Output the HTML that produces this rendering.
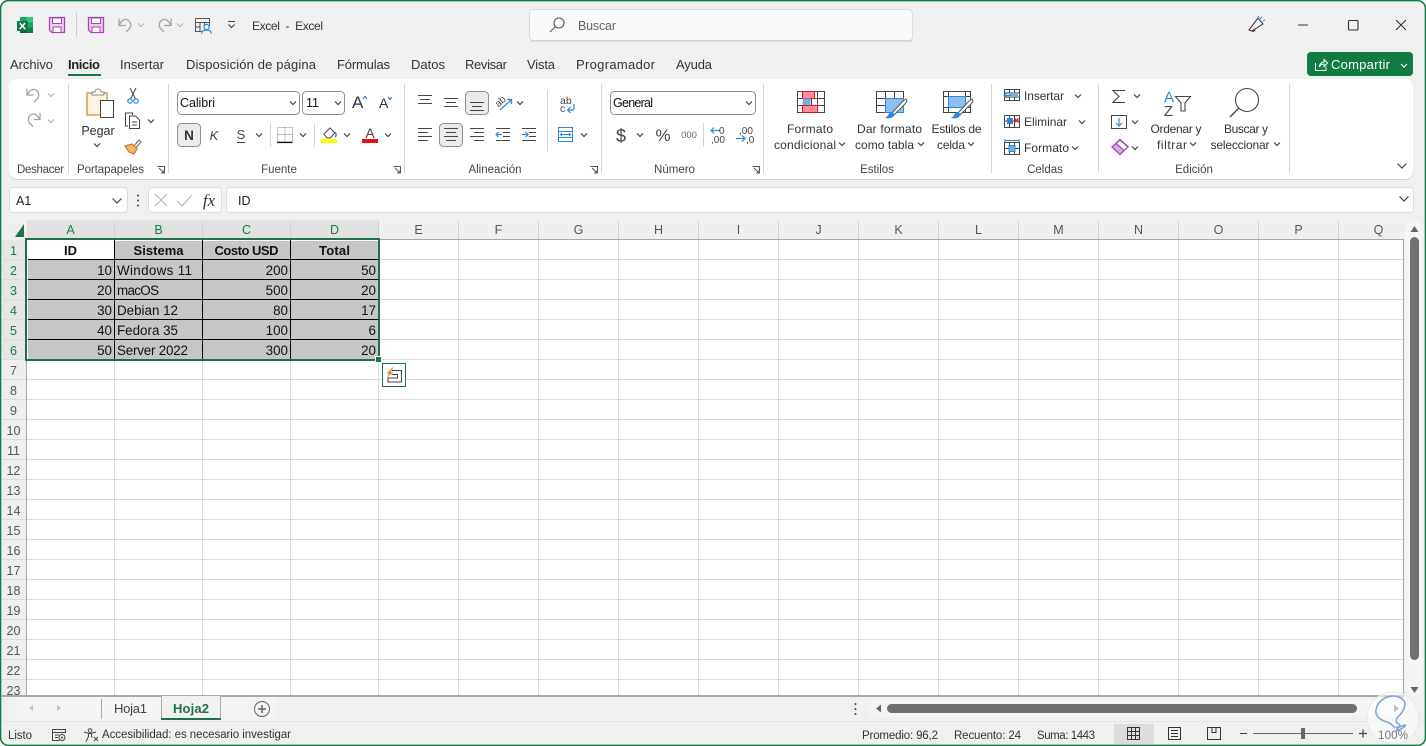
<!DOCTYPE html>
<html lang="es"><head><meta charset="utf-8"><title>Excel</title>
<style>
html,body{margin:0;padding:0;background:#fff;overflow:hidden}
svg{display:block}
text{font-family:"Liberation Sans",Arial,sans-serif;font-size:12px;fill:#333}
.t{font-size:13px;fill:#333}
.r{font-size:12px;fill:#333}
.g{font-size:11.5px;fill:#444}
.rh{font-size:12.5px;fill:#555;text-anchor:middle}
.rs{font-size:12.5px;fill:#1b7a4a;text-anchor:middle}
.c{font-size:13.4px;fill:#111}
.cr{font-size:13.4px;fill:#111;text-anchor:end}
.cb{font-size:13px;fill:#111;font-weight:bold;text-anchor:middle}
.m{text-anchor:middle}
.i{fill:none;stroke:#444;stroke-width:1}
.b{fill:none;stroke:#2b88d8;stroke-width:1.2}
</style></head><body>
<svg width="1426" height="746" viewBox="0 0 1426 746" xmlns="http://www.w3.org/2000/svg">
<defs>
<polyline id="ch" points="-3,-1.5 0,1.5 3,-1.5" fill="none" stroke="#444" stroke-width="1.2"/>
<polyline id="chg" points="-3,-1.5 0,1.5 3,-1.5" fill="none" stroke="#b5b5b5" stroke-width="1.2"/>
<polyline id="chb" points="-4.5,-2.5 0,2 4.5,-2.5" fill="none" stroke="#444" stroke-width="1.2"/>
</defs>
<!-- window -->
<rect width="1426" height="746" fill="#fff"/>
<rect x="0.5" y="0.5" width="1425" height="745" rx="8" fill="#f0f0f0" stroke="#107c41" stroke-width="1.4"/>

<!-- title bar: QAT -->
<rect x="20" y="17" width="13" height="16" rx="1" fill="#21a366"/>
<rect x="26.5" y="17" width="6.5" height="5.4" fill="#33c481"/>
<rect x="26.5" y="27.6" width="6.5" height="5.4" fill="#107c41"/>
<rect x="20" y="27.6" width="6.5" height="5.4" fill="#185c37"/>
<rect x="17" y="21" width="11" height="10" rx="1" fill="#107c41"/>
<path d="M19.7 23l5.4 6M25.1 23l-5.4 6" stroke="#fff" stroke-width="1.5"/>
<path d="M49.5 17.5h15v15h-12.5l-2.5-2.5z" fill="#eccdf0" stroke="#a347b5" stroke-width="1.3"/><rect x="52.5" y="18" width="9" height="5.5" fill="#fff" stroke="#a347b5"/><rect x="53" y="27" width="8" height="5.5" fill="#fff" stroke="#a347b5"/>
<path d="M88.5 17.5h15v15h-12.5l-2.5-2.5z" fill="#eccdf0" stroke="#a347b5" stroke-width="1.3"/><rect x="91.5" y="18" width="9" height="5.5" fill="#fff" stroke="#a347b5"/><rect x="92" y="27" width="8" height="5.5" fill="#fff" stroke="#a347b5"/>
<path d="M76.5 13v24" stroke="#ccc"/>
<path d="M119 18.5v7h7M119.5 25c2-5 5-6 7-5.500 4 1 5.500 6 3 9l-3.500 3.500" fill="none" stroke="#a3a3a3" stroke-width="1.3"/>
<use href="#chg" x="141" y="25"/>
<path d="M171 18.5v7h-7M170.5 25c-2-5-5-6-7-5.500-4 1-5.500 6-3 9l3.500 3.500" fill="none" stroke="#a3a3a3" stroke-width="1.3"/>
<use href="#chg" x="180" y="25"/>
<path d="M195.5 18.5h14v7M195.5 18.5v13h6M195.5 22.5h14M200 22.5v9M204.5 22.5v3M195.5 27h5" fill="none" stroke="#555"/>
<circle cx="206.5" cy="27" r="2.6" fill="none" stroke="#2b88d8" stroke-width="1.2"/><path d="M201.5 33.5c.5-3 2.500-3.500 5-3.500s4.500.5 5 3.500" fill="none" stroke="#2b88d8" stroke-width="1.2"/>
<path d="M228 21.5h7" stroke="#444"/><use href="#ch" x="231.5" y="26"/>
<text x="252" y="30" textLength="71" style="font-size:12px;white-space:pre">Excel  -  Excel</text>

<!-- search -->
<rect x="529.5" y="9.5" width="383" height="31" rx="4" fill="#fafafa" stroke="#dcdcdc"/>
<path d="M530 41h382" stroke="#c8c8c8"/>
<circle cx="559" cy="23" r="5" fill="none" stroke="#555" stroke-width="1.1"/><path d="M555.5 26.5l-5.5 5.5" stroke="#555" stroke-width="1.1"/>
<text x="578" y="30" textLength="38" style="font-size:12.5px;fill:#666">Buscar</text>

<!-- window controls -->
<path d="M1249 30l9-12 5 6-11 7zM1252 31a2 2 0 0 0 3-1" fill="none" stroke="#444" stroke-width="1.1"/>
<path d="M1260 19l2-2M1263 21l2-1M1258 17l1-1" stroke="#2b88d8"/>
<path d="M1298 25h10" stroke="#333"/>
<rect x="1348.5" y="20.5" width="9.5" height="9.5" rx="1" fill="none" stroke="#333" stroke-width="1.1"/>
<path d="M1396 20l10 10M1406 20l-10 10" stroke="#333" stroke-width="1.1"/>

<!-- tabs -->
<text class="t" x="10" y="69" textLength="43">Archivo</text>
<text class="t" x="68" y="69" textLength="32" style="font-weight:bold;fill:#222">Inicio</text>
<rect x="68" y="74" width="33" height="2" fill="#107c41"/>
<text class="t" x="120" y="69" textLength="44">Insertar</text>
<text class="t" x="186" y="69" textLength="130">Disposición de página</text>
<text class="t" x="337" y="69" textLength="53">Fórmulas</text>
<text class="t" x="411" y="69" textLength="34">Datos</text>
<text class="t" x="465" y="69" textLength="42">Revisar</text>
<text class="t" x="527" y="69" textLength="28">Vista</text>
<text class="t" x="576" y="69" textLength="79">Programador</text>
<text class="t" x="676" y="69" textLength="36">Ayuda</text>

<!-- compartir -->
<rect x="1307" y="52" width="106" height="24" rx="4" fill="#107c41"/>
<path d="M1315.5 63v7.5h10.500v-4M1319.5 67c0-3 2-5 4.500-5v-2.500l3.500 3.500-3.500 3.500v-2.500c-2 0-3.500 1-4.500 3z" fill="none" stroke="#fff"/>
<text x="1331" y="69" textLength="59" style="font-size:13px;fill:#fff">Compartir</text>
<polyline points="1401,64 1404,67 1407,64" fill="none" stroke="#fff" stroke-width="1.2"/>

<!-- ribbon -->
<rect x="9" y="81" width="1404" height="99" rx="8" fill="#000" opacity=".13"/>
<rect x="9" y="79" width="1404" height="100" rx="8" fill="#fff"/>
<path d="M68.5 84v89M168.500 84v89M404.500 84v89M601.500 84v89M763.500 84v89M991.500 84v89M1098.500 84v89M1289.500 84v89" stroke="#d4d4d4"/>
<text class="g" x="17" y="173" textLength="47">Deshacer</text>
<text class="g" x="77" y="173" textLength="67">Portapapeles</text>
<text class="g m" x="279" y="173">Fuente</text>
<text class="g m" x="495" y="173">Alineación</text>
<text class="g m" x="674.5" y="173">Número</text>
<text class="g m" x="877" y="173">Estilos</text>
<text class="g m" x="1045" y="173">Celdas</text>
<text class="g m" x="1194" y="173">Edición</text>
<!-- launchers -->
<path d="M157.5 166.5h7v7M159 168l5 5M161 173h3v-3" fill="none" stroke="#555"/>
<path d="M393.5 166.5h7v7M395 168l5 5M397 173h3v-3" fill="none" stroke="#555"/>
<path d="M590.5 166.5h7v7M592 168l5 5M594 173h3v-3" fill="none" stroke="#555"/>
<path d="M752.5 166.5h7v7M754 168l5 5M756 173h3v-3" fill="none" stroke="#555"/>

<!-- undo group -->
<path d="M27 88.5v6.500h6.500M27.500 95c2-5 5-6 7-5.500 4 1 5.500 6 3 9l-3.500 3.500" fill="none" stroke="#a3a3a3" stroke-width="1.3"/>
<use href="#chg" x="51" y="95"/>
<path d="M40 113v6.500h-6.500M39.500 119.500c-2-5-5-6-7-5.500-4 1-5.500 6-3 9l3.500 3.500" fill="none" stroke="#a3a3a3" stroke-width="1.3"/>
<use href="#chg" x="51" y="121"/>

<!-- clipboard -->
<path d="M91 93h16v22h-20v-22h4" fill="#fdf3e4" stroke="#d9893a" stroke-width="1.3"/>
<path d="M92 94v-2h3c0-4 6-4 6 0h3v3h-12z" fill="#fff" stroke="#888"/>
<rect x="100.5" y="100.5" width="13" height="17" fill="#fff" stroke="#444"/>
<text class="r m" x="98" y="135" style="font-size:12.5px">Pegar</text>
<use href="#ch" x="97" y="145"/>
<!-- scissors -->
<path d="M130 88l5.500 11M136 88l-5.500 11" stroke="#444"/>
<circle cx="130" cy="101" r="2.2" fill="none" stroke="#2b88d8" stroke-width="1.2"/><circle cx="136" cy="101" r="2.2" fill="none" stroke="#2b88d8" stroke-width="1.2"/>
<!-- copy -->
<path d="M128 126h-2.500v-13h7v2" fill="none" stroke="#444"/><path d="M129.500 116h6l4 4v8.500h-10z" fill="#fff" stroke="#444"/><path d="M132 122h5M132 125h5" stroke="#444"/>
<use href="#ch" x="151" y="121"/>
<!-- painter -->
<path d="M133 147l6-7 2 2-6 7" fill="none" stroke="#777" stroke-width="1.2"/>
<path d="M125 146l7-2 5 5-3 5-5-2z" fill="#f2b56b" stroke="#d9702a" stroke-width="1.2"/>

<!-- font -->
<rect x="177.5" y="91.5" width="122" height="23" rx="4" fill="#fff" stroke="#8e8e8e"/>
<text x="180" y="107" style="font-size:12.5px;fill:#111" textLength="35">Calibri</text>
<use href="#ch" x="293" y="103"/>
<rect x="302.5" y="91.5" width="42" height="23" rx="4" fill="#fff" stroke="#8e8e8e"/>
<text x="306" y="107" style="font-size:12.5px;fill:#111">11</text>
<use href="#ch" x="338" y="103"/>
<text x="352" y="108" style="font-size:17px;fill:#333">A</text>
<polyline points="363,99 365,96.5 367,99" fill="none" stroke="#2b88d8" stroke-width="1.2"/>
<text x="379" y="108" style="font-size:14px;fill:#333">A</text>
<polyline points="388,97 390,99.5 392,97" fill="none" stroke="#2b88d8" stroke-width="1.2"/>

<rect x="177.5" y="123.5" width="23" height="23" rx="4" fill="#ebebeb" stroke="#8e8e8e"/>
<text class="m" x="189" y="140" style="font-size:13.5px;font-weight:bold;fill:#333">N</text>
<text class="m" x="214" y="140" style="font-size:13px;font-style:italic;fill:#444">K</text>
<text class="m" x="241" y="139" style="font-size:13px;fill:#444">S</text><path d="M237 142.500h8" stroke="#444"/>
<use href="#ch" x="259" y="135"/>
<path d="M270.5 123v24M314.500 123v24" stroke="#d4d4d4"/>
<path d="M277.5 127.500h15v14h-15zM285 127.500v14M277.500 134.500h15" fill="none" stroke="#888" stroke-dasharray="1 1"/>
<path d="M277 142.500h15.500" stroke="#111" stroke-width="1.2"/>
<use href="#ch" x="303" y="135"/>
<path d="M324 134l6-6 5 5-5 5h-3z" fill="#fff" stroke="#444"/><path d="M335 132c1.500 2 1.500 4 0 5" fill="none" stroke="#2b88d8" stroke-width="1.5"/>
<rect x="321" y="139" width="16" height="4" fill="#ffff00"/>
<use href="#ch" x="347" y="135"/>
<text class="m" x="370" y="138" style="font-size:14px;fill:#444">A</text>
<rect x="362" y="139" width="16" height="4" fill="#e81010"/>
<use href="#ch" x="388" y="135"/>

<!-- alignment -->
<path d="M418 95.500h14M420 99.500h10M418 103.500h14" stroke="#444" fill="none"/>
<path d="M444 98.500h14M446 102.500h10M444 106.500h14" stroke="#444" fill="none"/>
<rect x="465.5" y="91.5" width="23" height="23" rx="4" fill="#ebebeb" stroke="#8e8e8e"/>
<path d="M470 102.500h14M472 106.500h10M470 110.500h14" stroke="#444" fill="none"/>
<text x="495" y="105" transform="rotate(-45 500 102)" style="font-size:10px;fill:#444">ab</text>
<path d="M500 110l11-10M507 99.500h4.500v4.500" fill="none" stroke="#2b88d8" stroke-width="1.2"/>
<use href="#ch" x="520" y="103"/>
<path d="M418 128.500h14M418 132.500h10M418 136.500h14M418 140.500h10" stroke="#444" fill="none"/>
<rect x="439.5" y="123.5" width="23" height="23" rx="4" fill="#ebebeb" stroke="#8e8e8e"/>
<path d="M444 128.500h14M446 132.500h10M444 136.500h14M446 140.500h10" stroke="#444" fill="none"/>
<path d="M470 128.500h14M474 132.500h10M470 136.500h14M474 140.500h10" stroke="#444" fill="none"/>
<path d="M496 128.500h14M503 132.500h7M503 136.500h7M496 140.500h14" stroke="#444" fill="none"/><path d="M502 134.500h-6M498.500 132l-2.500 2.500 2.500 2.500" class="b"/>
<path d="M522 128.500h14M529 132.500h7M529 136.500h7M522 140.500h14" stroke="#444" fill="none"/><path d="M522 134.500h6M525.500 132l2.500 2.500-2.500 2.500" class="b"/>
<path d="M547.5 90v62" stroke="#d4d4d4"/>
<text x="560" y="104" style="font-size:10.5px;fill:#444">ab</text>
<text x="560" y="112" style="font-size:10.5px;fill:#444">c</text>
<path d="M574 104v4c0 1.500-1 2-2 2h-4M570.500 107l-3 3 3 3" class="b"/>
<rect x="558.5" y="127.5" width="14" height="14" fill="#fff" stroke="#2b88d8"/>
<path d="M558.5 131.500h14M558.500 137.500h14" stroke="#2b88d8"/><path d="M560.5 134.500h10M562 133l-1.500 1.500 1.500 1.500M569 133l1.500 1.500-1.500 1.500" fill="none" stroke="#2b88d8"/>
<use href="#ch" x="584" y="135"/>

<!-- number -->
<rect x="610.5" y="91.5" width="145" height="23" rx="4" fill="#fff" stroke="#8e8e8e"/>
<text x="613" y="107" style="font-size:12.5px;fill:#111" textLength="40">General</text>
<use href="#ch" x="749" y="103"/>
<text class="m" x="621" y="142" style="font-size:18px;fill:#444">$</text>
<use href="#ch" x="640" y="135"/>
<text class="m" x="663" y="141" style="font-size:17px;fill:#444">%</text>
<text class="m" x="689" y="138" style="font-size:9.5px;fill:#666">000</text>
<path d="M703.5 123v24" stroke="#d4d4d4"/>
<path d="M720 130.500h-9M714 127.500l-3 3 3 3" class="b"/>
<text x="719" y="134" style="font-size:10px;fill:#444">0</text>
<text x="711" y="143" style="font-size:10px;fill:#444">,00</text>
<path d="M736 138.500h9M742 135.500l3 3-3 3" class="b"/>
<text x="739" y="134" style="font-size:10px;fill:#444">,00</text>
<text x="746" y="143" style="font-size:10px;fill:#444">,0</text>

<!-- Estilos icons -->
<g fill="none" stroke="#444">
<rect x="797.5" y="91.5" width="27" height="21"/>
<path d="M803.5 91.500v21M811.500 91.500v21M817.500 91.500v21M797.500 98.500h27M797.500 105.500h27"/>
</g>
<rect x="802.5" y="91.5" width="12" height="7" fill="#ff8f9a" stroke="#e81123"/>
<rect x="802.5" y="98.5" width="8" height="7" fill="#6fb1e8"/>
<rect x="802.5" y="105.5" width="15" height="7" fill="#ff8f9a" stroke="#e81123"/>
<text class="r m" x="810" y="133" textLength="46">Formato</text>
<text class="r m" x="805" y="149" textLength="62">condicional</text>
<use href="#ch" x="842" y="144"/>

<g fill="none" stroke="#444">
<rect x="876.5" y="91.5" width="27" height="21"/>
<path d="M876.5 98.500h27M876.500 105.500h27M885.500 91.500v21M894.500 91.500v21"/>
</g>
<rect x="885.5" y="98.5" width="18" height="14" fill="#8dc0ee" stroke="#2b88d8"/>
<path d="M892 113l11-12 3-2 1 2-2 3-11 11z" fill="#fff" stroke="#555"/>
<path d="M884 118c4 0 4-5 7-6 2 0 3 1 3 3 0 3-5 4-10 3z" fill="#2b88d8"/>
<text class="r m" x="889.5" y="133" textLength="65">Dar formato</text>
<text class="r m" x="884.5" y="149" textLength="59">como tabla</text>
<use href="#ch" x="921" y="144"/>

<g fill="none" stroke="#444">
<rect x="943.5" y="91.5" width="27" height="21"/>
<path d="M943.5 96.500h27M943.500 107.500h27M948.500 91.500v21M965.500 91.500v21"/>
</g>
<rect x="948.5" y="96.5" width="17" height="11" fill="#8dc0ee" stroke="#2b88d8"/>
<path d="M958 113l11-12 3-2 1 2-2 3-11 11z" fill="#fff" stroke="#555"/>
<path d="M950 118c4 0 4-5 7-6 2 0 3 1 3 3 0 3-5 4-10 3z" fill="#2b88d8"/>
<text class="r m" x="956.5" y="133" textLength="50">Estilos de</text>
<text class="r m" x="951" y="149" textLength="28">celda</text>
<use href="#ch" x="971" y="144"/>

<!-- Celdas -->
<g fill="none" stroke="#444">
<rect x="1004.5" y="89.5" width="15" height="11"/><path d="M1004.500 93h15M1004.500 97h15M1009.500 89.500v11M1014.500 89.500v11"/>
<rect x="1004.5" y="115.5" width="15" height="12"/><path d="M1004.500 121h15M1009.500 115.500v12M1014.500 115.500v12"/>
<rect x="1004.5" y="142.5" width="15" height="12"/><path d="M1004.500 148.500h15M1009.500 142.500v12M1014.500 142.500v12"/>
</g>
<rect x="1009" y="93" width="9" height="4" fill="#6fb1e8"/>
<path d="M1011 95.500h-7M1006.500 93l-2.500 2.500 2.500 2.500" class="b"/>
<rect x="1007" y="118" width="6" height="6" fill="#2b88d8"/>
<path d="M1014.500 118.500l4 4M1018.500 118.500l-4 4" stroke="#e81123" stroke-width="1.3"/>
<rect x="1009" y="145.5" width="6" height="6" fill="#6fb1e8" stroke="#2b88d8"/>
<path d="M1005 140.500h14M1005 139v3M1019 139v3" stroke="#2b88d8" fill="none"/>
<text class="r" x="1024" y="100" textLength="40">Insertar</text>
<text class="r" x="1024" y="126" textLength="43">Eliminar</text>
<text class="r" x="1024" y="152" textLength="45">Formato</text>
<use href="#ch" x="1078" y="96"/>
<use href="#ch" x="1082" y="122"/>
<use href="#ch" x="1075" y="148"/>

<!-- Edicion -->
<path d="M1125 90.500h-12l6 6-6 6h12" fill="none" stroke="#444" stroke-width="1.1"/>
<use href="#ch" x="1137" y="96"/>
<rect x="1111.5" y="115.5" width="15" height="13" fill="#fff" stroke="#444"/>
<path d="M1119 118v8M1116 123l3 3 3-3" class="b"/>
<use href="#ch" x="1135" y="122"/>
<path d="M1112 147l8-7.500 8 7-8 8z" fill="#d9a8e2" stroke="#a347b5" stroke-width="1.3"/>
<path d="M1116 143.500l8 7" stroke="#a347b5"/><path d="M1120 140l8 7-4 3.500-8-7z" fill="#fff" stroke="#a347b5" stroke-width="1.2"/>
<use href="#ch" x="1135" y="148"/>

<text class="m" x="1169" y="102" style="font-size:15px;fill:#2b88d8">A</text>
<text class="m" x="1168.5" y="116" style="font-size:15px;fill:#444">Z</text>
<path d="M1175.5 96.500h15l-5.500 6.500v8h-4v-8z" fill="#fff" stroke="#444" stroke-width="1.1"/>
<text class="r m" x="1176" y="133" textLength="51">Ordenar y</text>
<text class="r m" x="1172" y="149" textLength="30">filtrar</text>
<use href="#ch" x="1193" y="144"/>

<circle cx="1247" cy="100" r="11.5" fill="none" stroke="#444" stroke-width="1.1"/>
<path d="M1239 108l-9 9" stroke="#444" stroke-width="1.3"/>
<text class="r m" x="1246" y="133" textLength="44">Buscar y</text>
<text class="r m" x="1240" y="149" textLength="59">seleccionar</text>
<use href="#ch" x="1277" y="144"/>
<use href="#chb" x="1402" y="166"/>

<!-- formula bar -->
<rect x="9.5" y="187.5" width="118" height="25" rx="4" fill="#fff" stroke="#dcdcdc"/>
<text x="16" y="205" style="font-size:12.5px;fill:#222">A1</text>
<use href="#chb" x="117" y="201"/>
<circle cx="138" cy="195.5" r="1" fill="#444"/><circle cx="138" cy="200.5" r="1" fill="#444"/><circle cx="138" cy="205.5" r="1" fill="#444"/>
<rect x="148.5" y="187.5" width="73" height="25" rx="4" fill="#fff" stroke="#dcdcdc"/>
<path d="M155 194l12 12M167 194l-12 12" stroke="#b8b8b8" stroke-width="1.2"/>
<path d="M177 201l5 5 10-11" fill="none" stroke="#b8b8b8" stroke-width="1.2"/>
<text class="m" x="209" y="206" style="font-family:'Liberation Serif',serif;font-style:italic;font-size:17px;fill:#333">fx</text>
<rect x="226.5" y="187.5" width="1187" height="25" rx="4" fill="#fff" stroke="#dcdcdc"/>
<text x="238" y="205" style="font-size:12.5px;fill:#222">ID</text>
<use href="#chb" x="1404" y="199"/>

<!-- sheet -->
<rect x="2" y="220" width="1402" height="19" fill="#efefef"/>
<rect x="27" y="220" width="352" height="19" fill="#e1e1e1"/>
<rect x="2" y="240" width="25" height="456" fill="#efefef"/>
<rect x="2" y="240" width="25" height="120" fill="#e6e6e6"/>
<rect x="27" y="240" width="1377" height="456" fill="#fff"/>
<path d="M24 224v13h-9z" fill="#217346"/>
<!-- header separators -->
<path d="M114.5 222v17M202.500 222v17M290.500 222v17M378.500 222v17M458.500 222v17M538.500 222v17M618.500 222v17M698.500 222v17M778.500 222v17M858.500 222v17M938.500 222v17M1018.500 222v17M1098.500 222v17M1178.500 222v17M1258.500 222v17M1338.500 222v17" stroke="#d0d0d0"/>
<!-- grid -->
<path stroke="#dcdcdc" fill="none" d="M114.500 240v456M202.500 240v456M290.500 240v456M378.500 240v456M458.500 240v456M538.500 240v456M618.500 240v456M698.500 240v456M778.500 240v456M858.500 240v456M938.500 240v456M1018.500 240v456M1098.500 240v456M1178.500 240v456M1258.500 240v456M1338.500 240v456
M2 259.500H1404M2 279.500H1404M2 299.500H1404M2 319.500H1404M2 339.500H1404M2 359.500H1404M2 379.500H1404M2 399.500H1404M2 419.500H1404M2 439.500H1404M2 459.500H1404M2 479.500H1404M2 499.500H1404M2 519.500H1404M2 539.500H1404M2 559.500H1404M2 579.500H1404M2 599.500H1404M2 619.500H1404M2 639.500H1404M2 659.500H1404M2 679.500H1404"/>
<path d="M26.500 239.500H1403.500V695.500H2M26.500 239.500V696" stroke="#a8a8a8" fill="none"/>
<!-- col headers -->
<text class="rs" x="70.5" y="234">A</text><text class="rs" x="158.5" y="234">B</text><text class="rs" x="246.5" y="234">C</text><text class="rs" x="334.5" y="234">D</text>
<text class="rh" x="418.5" y="234">E</text><text class="rh" x="498.5" y="234">F</text><text class="rh" x="578.5" y="234">G</text><text class="rh" x="658.5" y="234">H</text><text class="rh" x="738.5" y="234">I</text><text class="rh" x="818.5" y="234">J</text><text class="rh" x="898.5" y="234">K</text><text class="rh" x="978.5" y="234">L</text><text class="rh" x="1058.5" y="234">M</text><text class="rh" x="1138.5" y="234">N</text><text class="rh" x="1218.5" y="234">O</text><text class="rh" x="1298.5" y="234">P</text><text class="rh" x="1378.5" y="234">Q</text>
<!-- row headers -->
<text class="rs" x="13.5" y="255">1</text><text class="rs" x="13.5" y="275">2</text><text class="rs" x="13.5" y="295">3</text><text class="rs" x="13.5" y="315">4</text><text class="rs" x="13.5" y="335">5</text><text class="rs" x="13.5" y="355">6</text>
<text class="rh" x="13.5" y="375">7</text><text class="rh" x="13.5" y="395">8</text><text class="rh" x="13.5" y="415">9</text><text class="rh" x="13.5" y="435">10</text><text class="rh" x="13.5" y="455">11</text><text class="rh" x="13.5" y="475">12</text><text class="rh" x="13.5" y="495">13</text><text class="rh" x="13.5" y="515">14</text><text class="rh" x="13.5" y="535">15</text><text class="rh" x="13.5" y="555">16</text><text class="rh" x="13.5" y="575">17</text><text class="rh" x="13.5" y="595">18</text><text class="rh" x="13.5" y="615">19</text><text class="rh" x="13.5" y="635">20</text><text class="rh" x="13.5" y="655">21</text><text class="rh" x="13.5" y="675">22</text><text class="rh" x="13.5" y="695">23</text>
<rect x="2" y="696" width="1402" height="1" fill="#a8a8a8"/>

<!-- data -->
<rect x="28" y="241" width="350" height="118" fill="#c6c6c6"/>
<rect x="28" y="241" width="86" height="18" fill="#fff"/>
<path d="M114.500 240v119M202.500 240v119M290.500 240v119M28 259.500h350M28 279.500h350M28 299.500h350M28 319.500h350M28 339.500h350" stroke="#000" fill="none"/>
<text class="cb" x="70.5" y="255">ID</text><text class="cb" x="158.5" y="255" textLength="50">Sistema</text><text class="cb" x="246.5" y="255" textLength="64">Costo USD</text><text class="cb" x="334.5" y="255" textLength="31">Total</text>
<text class="cr" x="112" y="275">10</text><text class="c" x="117" y="275" textLength="75">Windows 11</text><text class="cr" x="288" y="275">200</text><text class="cr" x="376" y="275">50</text>
<text class="cr" x="112" y="295">20</text><text class="c" x="117" y="295" textLength="42">macOS</text><text class="cr" x="288" y="295">500</text><text class="cr" x="376" y="295">20</text>
<text class="cr" x="112" y="315">30</text><text class="c" x="117" y="315" textLength="61">Debian 12</text><text class="cr" x="288" y="315">80</text><text class="cr" x="376" y="315">17</text>
<text class="cr" x="112" y="335">40</text><text class="c" x="117" y="335" textLength="61">Fedora 35</text><text class="cr" x="288" y="335">100</text><text class="cr" x="376" y="335">6</text>
<text class="cr" x="112" y="355">50</text><text class="c" x="117" y="355" textLength="71">Server 2022</text><text class="cr" x="288" y="355">300</text><text class="cr" x="376" y="355">20</text>
<rect x="26" y="239" width="353" height="121" fill="none" stroke="#1f7246" stroke-width="2"/>
<rect x="375.5" y="356.5" width="6" height="6" fill="#1f7246" stroke="#fff"/>
<!-- quick analysis -->
<rect x="382.5" y="363.5" width="23" height="23" fill="#fff" stroke="#1f7246"/>
<path d="M392 370.500h9.500v11.500h-13.500v-4h9.500v-3.500h-6" fill="none" stroke="#444"/>
<path d="M392.500 367.500l-6 6h2.500l-2.500 4.500 6.500-6h-2.500l3-4.500z" fill="#e8862a"/>

<!-- tab bar -->
<rect x="2" y="697" width="1402" height="24" fill="#f0f0f0"/>
<rect x="17" y="697" width="260" height="23" fill="#f4f4f4"/>
<path d="M33 705v6l-4-3zM57 705v6l4-3z" fill="#c4c4c4"/>
<path d="M101.500 699v20" stroke="#aaa"/>
<text x="114" y="713" textLength="33" style="font-size:13px;fill:#444">Hoja1</text>
<rect x="162" y="696" width="59" height="24" fill="#f0f0f0"/>
<path d="M161.500 697v21M220.500 696v22" stroke="#aaa"/>
<rect x="161" y="718" width="60" height="2" fill="#1f7246"/>
<text x="173" y="713" textLength="36" style="font-size:13px;font-weight:bold;fill:#1f7246">Hoja2</text>
<circle cx="262" cy="709" r="7.5" fill="none" stroke="#777" stroke-width="1.2"/><path d="M258 709h8M262 705v8" stroke="#666" stroke-width="1.5"/>
<circle cx="855.5" cy="704" r="1" fill="#444"/><circle cx="855.5" cy="709" r="1" fill="#444"/><circle cx="855.5" cy="714" r="1" fill="#444"/>
<rect x="868" y="700" width="534" height="17" rx="8" fill="#f5f5f5"/>
<path d="M881 704.500v8l-5-4z" fill="#666"/>
<rect x="887" y="704" width="470" height="9" rx="4.5" fill="#707070"/>
<path d="M1394 704.500v8l5-4z" fill="#777"/>
<!-- vscroll -->
<rect x="1405" y="220" width="18" height="476" rx="8" fill="#f5f5f5"/>
<path d="M1410.500 232l4-6 4 6z" fill="#666"/>
<rect x="1410" y="237" width="9" height="423" rx="4.5" fill="#707070"/>
<path d="M1410.500 687l4 6 4-6z" fill="#666"/>

<!-- status -->
<path d="M2 721.500H1424" stroke="#e4e4e4"/>
<text x="8" y="739" textLength="24" style="font-size:11.5px;fill:#333">Listo</text>
<path d="M52.500 729.500h13v3h-13zM52.500 732.500v8h7M55 735h4M55 737.500h3" fill="none" stroke="#444"/><circle cx="62" cy="737.5" r="3" fill="none" stroke="#444"/><circle cx="62" cy="737.5" r="1" fill="#444"/>
<circle cx="90" cy="730.5" r="1.8" fill="none" stroke="#444"/><path d="M84 732l5 1.500h2l5-1.500M88.500 733.500v3l-2.500 5M91.500 733.500v3l1 1M94 737l4 4M98 737l-4 4" fill="none" stroke="#444"/>
<text x="102" y="738" textLength="189" style="font-size:11.5px;fill:#333">Accesibilidad: es necesario investigar</text>
<text x="862" y="739" textLength="76" style="font-size:11.5px;fill:#333">Promedio: 96,2</text>
<text x="954" y="739" textLength="67" style="font-size:11.5px;fill:#333">Recuento: 24</text>
<text x="1037" y="739" textLength="58" style="font-size:11.5px;fill:#333">Suma: 1443</text>
<rect x="1114" y="724" width="40" height="21" fill="#dcdcdc"/>
<path d="M1127.500 727.500h12v12h-12zM1127.500 731.500h12M1127.500 735.500h12M1131.500 727.500v12M1135.500 727.500v12" fill="none" stroke="#333"/>
<path d="M1168.500 727.500h12v12h-12z" fill="none" stroke="#333"/><path d="M1171 730.500h7M1171 733.500h7M1171 736.500h7" stroke="#333"/>
<path d="M1207.500 727.500h13v12h-13zM1212 727.500v5h4v-5" fill="none" stroke="#333"/>
<path d="M1240 733.500h7" stroke="#444"/>
<path d="M1253 733.500h100" stroke="#666"/>
<rect x="1301" y="728" width="4" height="11" fill="#666"/>
<path d="M1359 733.500h8M1363 729.500v8" stroke="#444" stroke-width="1.2"/>

<!-- watermark -->
<circle cx="1393" cy="718" r="26" fill="#fff" opacity=".55"/>
<circle cx="1393" cy="718" r="26" fill="none" stroke="#e3e8f0" stroke-width="1"/>
<text x="1378" y="739" textLength="30" style="font-size:11.5px;fill:#777">100%</text>
<path d="M1395 728c-3-4-7-6-11-7-5-2-9-6-8-11 1-8 9-14 17-14 7 0 12 4 12 8 0 5-3 9-7 13-3 3-2 6 1 7 2 2 0 3-3 4l9-3c2 0-2 4-9 6 3-3 2-4 0-4" fill="none" stroke="#7ea3d4" stroke-width="1.5"/>

<!-- border -->
<rect x="0.5" y="0.5" width="1425" height="745" rx="8" fill="none" stroke="#107c41" stroke-width="1.4"/>
</svg>
</body></html>
